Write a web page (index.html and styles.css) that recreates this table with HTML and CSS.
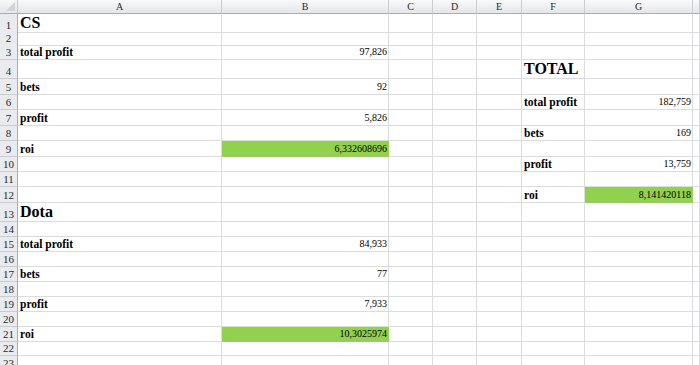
FILE: index.html
```html
<!DOCTYPE html>
<html>
<head>
<meta charset="utf-8">
<link rel="stylesheet" href="styles.css">
</head>
<body>
<div class="sheet">
  <div class="row hdr">
    <div class="corner"><span class="tri"></span></div>
    <div class="ch">A</div><div class="ch">B</div><div class="ch">C</div><div class="ch">D</div><div class="ch">E</div><div class="ch">F</div><div class="ch">G</div><div class="ch"></div>
  </div>
  <div class="row r18"><div class="rh">1</div><div class="c big">CS</div><div class="c"></div><div class="c"></div><div class="c"></div><div class="c"></div><div class="c"></div><div class="c"></div><div class="c"></div></div>
  <div class="row r13"><div class="rh">2</div><div class="c"></div><div class="c"></div><div class="c"></div><div class="c"></div><div class="c"></div><div class="c"></div><div class="c"></div><div class="c"></div></div>
  <div class="row r15"><div class="rh">3</div><div class="c lbl">total profit</div><div class="c num">97,826</div><div class="c"></div><div class="c"></div><div class="c"></div><div class="c"></div><div class="c"></div><div class="c"></div></div>
  <div class="row r19"><div class="rh">4</div><div class="c"></div><div class="c"></div><div class="c"></div><div class="c"></div><div class="c"></div><div class="c big">TOTAL</div><div class="c"></div><div class="c"></div></div>
  <div class="row r16"><div class="rh">5</div><div class="c lbl">bets</div><div class="c num">92</div><div class="c"></div><div class="c"></div><div class="c"></div><div class="c"></div><div class="c"></div><div class="c"></div></div>
  <div class="row r15"><div class="rh">6</div><div class="c"></div><div class="c"></div><div class="c"></div><div class="c"></div><div class="c"></div><div class="c lbl">total profit</div><div class="c num">182,759</div><div class="c"></div></div>
  <div class="row r16"><div class="rh">7</div><div class="c lbl">profit</div><div class="c num">5,826</div><div class="c"></div><div class="c"></div><div class="c"></div><div class="c"></div><div class="c"></div><div class="c"></div></div>
  <div class="row r15"><div class="rh">8</div><div class="c"></div><div class="c"></div><div class="c"></div><div class="c"></div><div class="c"></div><div class="c lbl">bets</div><div class="c num">169</div><div class="c"></div></div>
  <div class="row r16"><div class="rh">9</div><div class="c lbl">roi</div><div class="c num green">6,332608696</div><div class="c"></div><div class="c"></div><div class="c"></div><div class="c"></div><div class="c"></div><div class="c"></div></div>
  <div class="row r15"><div class="rh">10</div><div class="c"></div><div class="c"></div><div class="c"></div><div class="c"></div><div class="c"></div><div class="c lbl">profit</div><div class="c num">13,759</div><div class="c"></div></div>
  <div class="row r15"><div class="rh">11</div><div class="c"></div><div class="c"></div><div class="c"></div><div class="c"></div><div class="c"></div><div class="c"></div><div class="c"></div><div class="c"></div></div>
  <div class="row r16"><div class="rh">12</div><div class="c"></div><div class="c"></div><div class="c"></div><div class="c"></div><div class="c"></div><div class="c lbl">roi</div><div class="c num green">8,141420118</div><div class="c"></div></div>
  <div class="row r19"><div class="rh">13</div><div class="c big">Dota</div><div class="c"></div><div class="c"></div><div class="c"></div><div class="c"></div><div class="c"></div><div class="c"></div><div class="c"></div></div>
  <div class="row r15"><div class="rh">14</div><div class="c"></div><div class="c"></div><div class="c"></div><div class="c"></div><div class="c"></div><div class="c"></div><div class="c"></div><div class="c"></div></div>
  <div class="row r15"><div class="rh">15</div><div class="c lbl">total profit</div><div class="c num">84,933</div><div class="c"></div><div class="c"></div><div class="c"></div><div class="c"></div><div class="c"></div><div class="c"></div></div>
  <div class="row r15"><div class="rh">16</div><div class="c"></div><div class="c"></div><div class="c"></div><div class="c"></div><div class="c"></div><div class="c"></div><div class="c"></div><div class="c"></div></div>
  <div class="row r15"><div class="rh">17</div><div class="c lbl">bets</div><div class="c num">77</div><div class="c"></div><div class="c"></div><div class="c"></div><div class="c"></div><div class="c"></div><div class="c"></div></div>
  <div class="row r15"><div class="rh">18</div><div class="c"></div><div class="c"></div><div class="c"></div><div class="c"></div><div class="c"></div><div class="c"></div><div class="c"></div><div class="c"></div></div>
  <div class="row r15"><div class="rh">19</div><div class="c lbl">profit</div><div class="c num">7,933</div><div class="c"></div><div class="c"></div><div class="c"></div><div class="c"></div><div class="c"></div><div class="c"></div></div>
  <div class="row r15"><div class="rh">20</div><div class="c"></div><div class="c"></div><div class="c"></div><div class="c"></div><div class="c"></div><div class="c"></div><div class="c"></div><div class="c"></div></div>
  <div class="row r15"><div class="rh">21</div><div class="c lbl">roi</div><div class="c num green">10,3025974</div><div class="c"></div><div class="c"></div><div class="c"></div><div class="c"></div><div class="c"></div><div class="c"></div></div>
  <div class="row r14"><div class="rh">22</div><div class="c"></div><div class="c"></div><div class="c"></div><div class="c"></div><div class="c"></div><div class="c"></div><div class="c"></div><div class="c"></div></div>
  <div class="row r15"><div class="rh">23</div><div class="c"></div><div class="c"></div><div class="c"></div><div class="c"></div><div class="c"></div><div class="c"></div><div class="c"></div><div class="c"></div></div>
</div>
</body>
</html>
```
FILE: styles.css
```css
html, body {
  margin: 0;
  padding: 0;
  background: #ffffff;
}
.sheet {
  width: 700px;
  height: 365px;
  overflow: hidden;
  font-family: "Liberation Serif", "Times New Roman", serif;
  color: #000;
}
.row {
  display: grid;
  grid-template-columns: 18px 204px 167px 44px 44px 45px 63px 108px 1fr;
  box-sizing: border-box;
}
.hdr { height: 14px; }
.r13 { height: 13px; }
.r14 { height: 14px; }
.r15 { height: 15px; }
.r16 { height: 16px; }
.r18 { height: 18px; }
.r19 { height: 19px; }

.corner {
  position: relative;
  background: linear-gradient(#f6f7f9, #e4e7eb);
  border-right: 1px solid #c4c8cd;
  border-bottom: 1px solid #a9adb3;
}
.tri {
  position: absolute;
  right: 2px;
  bottom: 2px;
  width: 0;
  height: 0;
  border-left: 9px solid transparent;
  border-bottom: 9px solid #cfd3d8;
}
.ch {
  background: linear-gradient(#f8f9fa, #e3e6ea);
  border-right: 1px solid #c9cdd2;
  border-bottom: 1px solid #a9adb3;
  font-size: 10px;
  line-height: 13px;
  text-align: center;
  color: #2a2a2a;
}
.rh {
  background: #e9ebee;
  border-right: 1px solid #a9adb3;
  border-bottom: 1px solid #c9cdd2;
  font-size: 11px;
  color: #2a2a2a;
  display: flex;
  align-items: flex-end;
  justify-content: center;
  line-height: 12px;
  padding-bottom: 1px;
}
.c {
  border-right: 1px solid #dadcdd;
  border-bottom: 1px solid #dadcdd;
  display: flex;
  align-items: flex-end;
  padding: 0 2px 1px 2px;
  white-space: nowrap;
  overflow: visible;
  min-width: 0;
}
.lbl {
  font-weight: bold;
  font-size: 11.5px;
  line-height: 12px;
}
.big {
  font-weight: bold;
  font-size: 16px;
  line-height: 17px;
}
.num {
  justify-content: flex-end;
  font-size: 10px;
  line-height: 12px;
  padding-right: 1px;
}
.green {
  background: #92d050;
  border-right-color: #92d050;
  border-bottom-color: #92d050;
}
```
